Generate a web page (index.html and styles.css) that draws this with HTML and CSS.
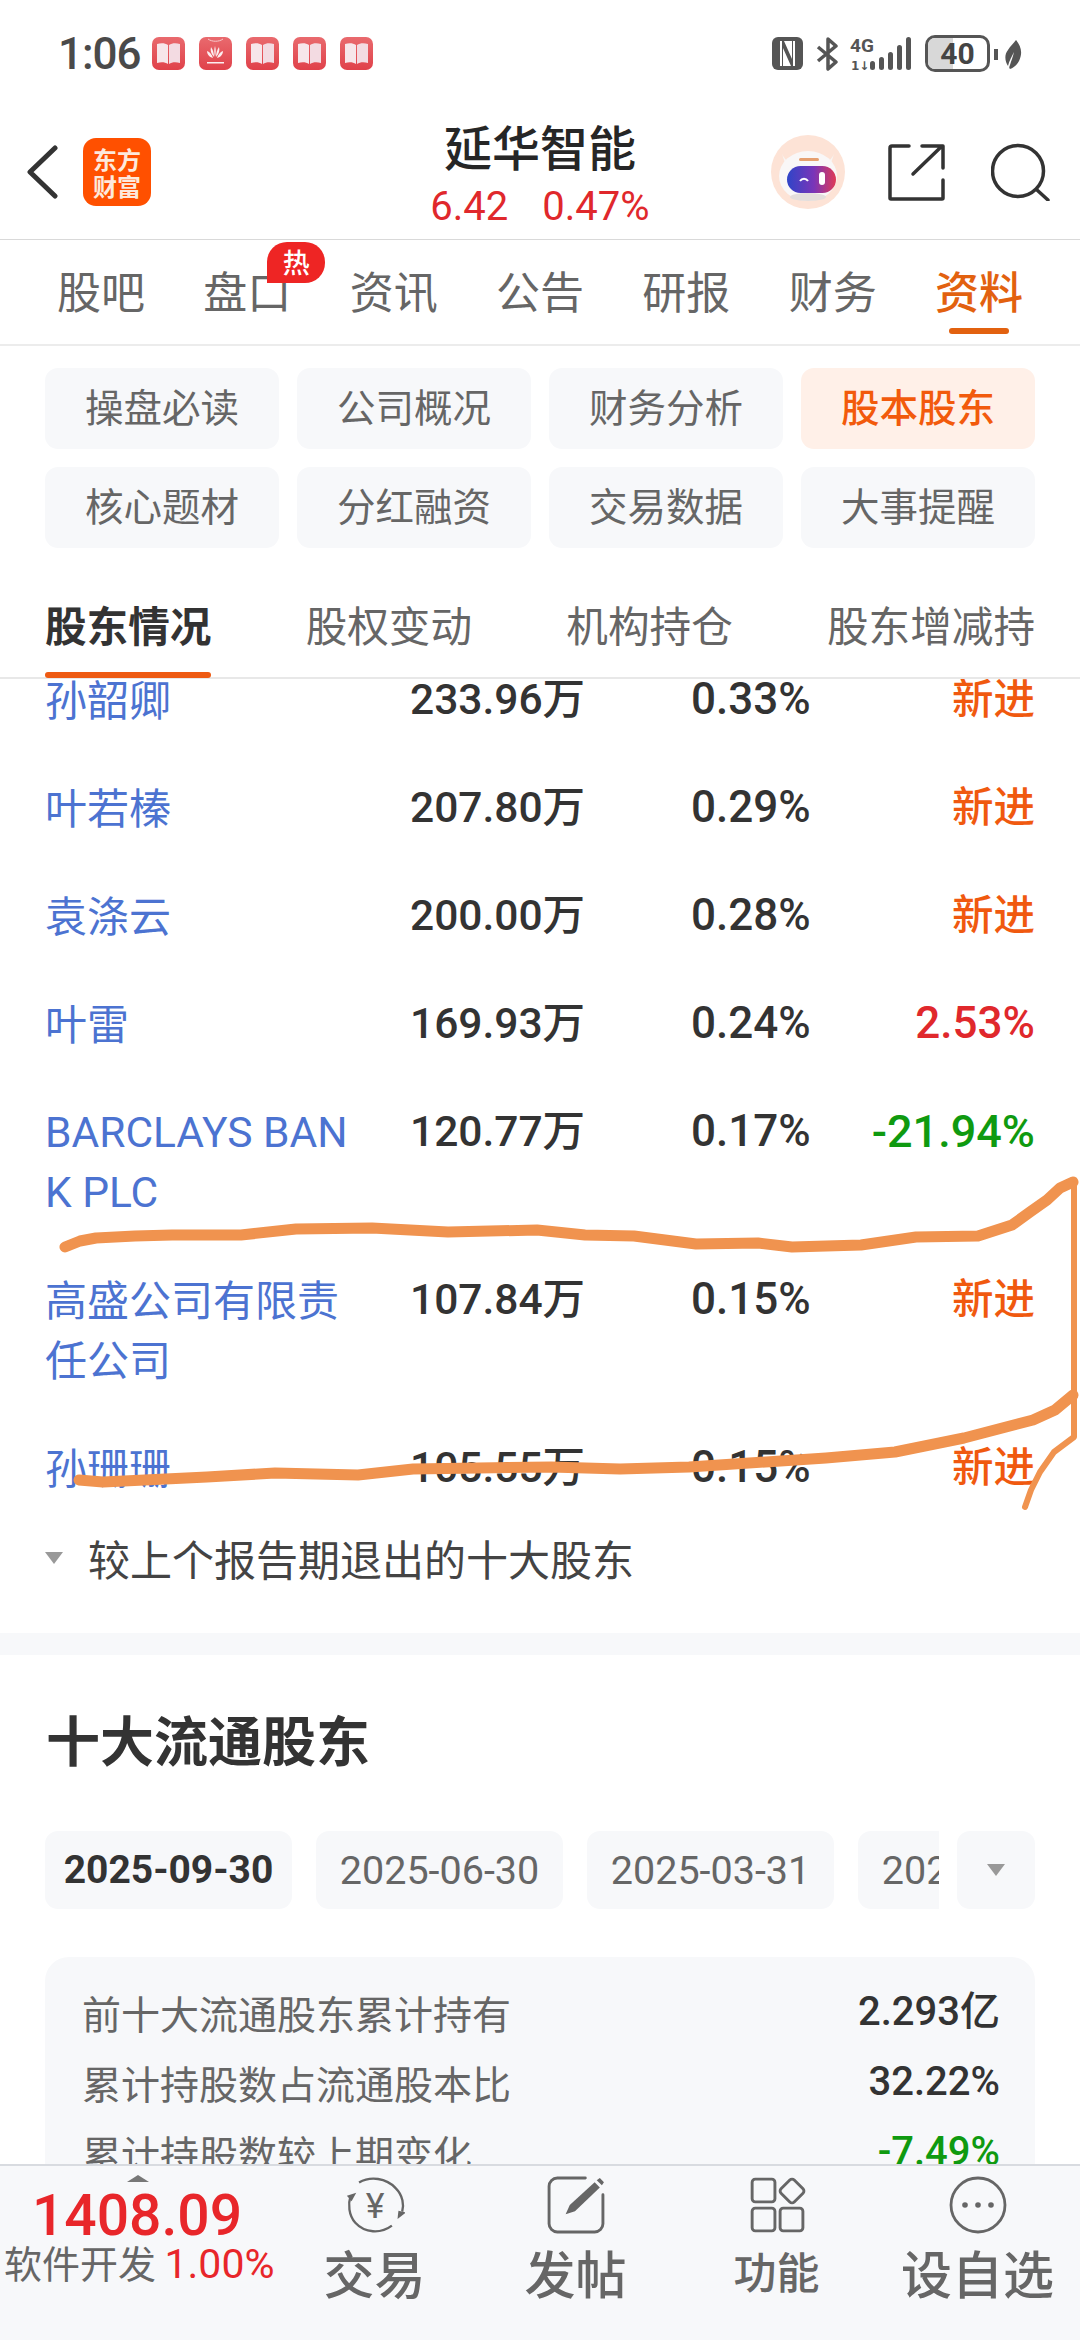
FILE: index.html
```html
<!DOCTYPE html>
<html lang="zh-CN">
<head>
  <meta charset="UTF-8">
  <meta name="viewport" content="width=device-width, initial-scale=1.0">
  <title>延华智能</title>
  <link rel="stylesheet" href="styles.css">
</head>
<body>
  <svg width="0" height="0" class="defs">
    <defs>
      <linearGradient id="appRed" x1="0" y1="0" x2="0" y2="1">
        <stop offset="0" stop-color="#e96a6e"/>
        <stop offset="1" stop-color="#e0414a"/>
      </linearGradient>
      <linearGradient id="visor" x1="0" y1="0" x2="1" y2="0">
        <stop offset="0" stop-color="#2f45c8"/>
        <stop offset="0.55" stop-color="#7a35b8"/>
        <stop offset="1" stop-color="#e03a55"/>
      </linearGradient>
      <symbol id="bookApp" viewBox="0 0 33 33">
        <rect width="33" height="33" rx="7" fill="url(#appRed)"/>
        <path d="M5 7c4-1 8-1 11 1v19c-3-2-7-2-11-1z" fill="#f7e6ea"/>
        <path d="M28 7c-4-1-8-1-11 1v19c3-2 7-2 11-1z" fill="#f3dbe2"/>
      </symbol>
    </defs>
  </svg>

  <div class="page">
    <div class="status-bar">
      <div class="status-left">
        <span class="time">1:06</span>
        <svg class="app-icon"><use href="#bookApp"/></svg>
        <svg class="app-icon" viewBox="0 0 33 33">
          <rect width="33" height="33" rx="7" fill="url(#appRed)"/>
          <path d="M9 2c4 3 11 3 15 0" fill="none" stroke="#f7c9cc" stroke-width="1"/>
          <g fill="#fbeef0">
            <path d="M16 20c-1-4-1-8 0-11 1 3 1 7 0 11z"/>
            <path d="M17 20c0-4 1-7 3-10 1 3 0 7-3 10z"/>
            <path d="M15 20c0-4-1-7-3-10-1 3 0 7 3 10z"/>
            <path d="M18 21c1-3 3-6 6-7 0 3-2 6-6 7z"/>
            <path d="M14 21c-1-3-3-6-6-7 0 3 2 6 6 7z"/>
            <rect x="8" y="25" width="17" height="1.5"/>
          </g>
        </svg>
        <svg class="app-icon"><use href="#bookApp"/></svg>
        <svg class="app-icon"><use href="#bookApp"/></svg>
        <svg class="app-icon"><use href="#bookApp"/></svg>
      </div>
      <div class="status-right">
        <svg class="nfc" viewBox="0 0 31 33">
          <rect width="31" height="33" rx="6" fill="#555"/>
          <path d="M9 4v25M22 4v25" stroke="#fff" stroke-width="2" fill="none"/>
          <path d="M12 4h8v18zM11 11l8 18h-8z" fill="#fff"/>
        </svg>
        <svg class="bt" viewBox="0 0 23 34">
          <path d="M2 10l18 15-8 7V2l8 7L2 24" fill="none" stroke="#555" stroke-width="3.5" stroke-linejoin="round"/>
        </svg>
        <svg class="signal" viewBox="0 0 62 36">
          <text x="0" y="16" class="net-text">4G</text>
          <text x="1" y="34" class="net-small">1↓</text>
          <rect x="20" y="25" width="5" height="9" rx="2.5" fill="#555"/>
          <rect x="29" y="21" width="5" height="13" rx="2.5" fill="#555"/>
          <rect x="38" y="16" width="5" height="18" rx="2.5" fill="#555"/>
          <rect x="47" y="9" width="5" height="25" rx="2.5" fill="#555"/>
          <rect x="56" y="1" width="5" height="33" rx="2.5" fill="#555"/>
        </svg>
        <div class="battery"><span class="battery-fill"></span><span class="battery-num">40</span></div>
        <span class="battery-tip"></span>
        <svg class="leaf" viewBox="0 0 17 30">
          <path d="M11 0c5 6 7 13 3 21-2 4-6 7-9 8-1-1-1-2 0-4 1-4 3-8 4-13-2 4-5 9-6 14C0 21-1 15 3 10 5 6 9 3 11 0z" fill="#555"/>
        </svg>
      </div>
    </div>

    <div class="header">
      <div class="header-left">
        <svg class="back" viewBox="0 0 31 54">
          <polyline points="28,3 3,27 28,51" fill="none" stroke="#333" stroke-width="5" stroke-linecap="round" stroke-linejoin="round"/>
        </svg>
        <div class="logo">东方<br>财富</div>
      </div>
      <div class="header-title">
        <div class="stock-name">延华智能</div>
        <div class="stock-price"><span>6.42</span><span>0.47%</span></div>
      </div>
      <div class="header-right">
        <svg class="robot" viewBox="0 0 74 74">
          <circle cx="37" cy="37" r="37" fill="#fde3d6"/>
          <path d="M10 16c2 7 6 11 12 12l-6 6zM64 16c-2 7-6 11-12 12l6 6z" fill="#f8f5f3"/>
          <ellipse cx="37" cy="41" rx="29" ry="25" fill="#f9f7f7"/>
          <ellipse cx="37" cy="62" rx="18" ry="4" fill="#e4dedc"/>
          <rect x="28" y="23" width="20" height="3" rx="1.5" fill="#e6a070"/>
          <rect x="16" y="31" width="49" height="27" rx="13.5" fill="url(#visor)"/>
          <path d="M29 46c2-3 6-3 8 0" fill="none" stroke="#fff" stroke-width="2"/>
          <rect x="48" y="37" width="6" height="13" rx="3" fill="#fff"/>
        </svg>
        <svg class="share" viewBox="0 0 58 58">
          <path d="M22 3H5a2 2 0 0 0-2 2v50a1 1 0 0 0 1 1h51a1 1 0 0 0 1-1V37M26 31L55 3M35 3h21v22" fill="none" stroke="#333" stroke-width="3.5" stroke-linecap="round" stroke-linejoin="round"/>
        </svg>
        <svg class="search" viewBox="0 0 60 58">
          <circle cx="27" cy="28" r="25.5" fill="none" stroke="#333" stroke-width="3.5"/>
          <path d="M46 47l11 10" fill="none" stroke="#333" stroke-width="3.5" stroke-linecap="round"/>
        </svg>
      </div>
    </div>

    <div class="tabs">
      <a class="tab">股吧</a>
      <a class="tab">盘口<span class="hot">热</span></a>
      <a class="tab">资讯</a>
      <a class="tab">公告</a>
      <a class="tab">研报</a>
      <a class="tab">财务</a>
      <a class="tab active">资料</a>
    </div>

    <div class="chips">
      <a class="chip">操盘必读</a>
      <a class="chip">公司概况</a>
      <a class="chip">财务分析</a>
      <a class="chip active">股本股东</a>
      <a class="chip">核心题材</a>
      <a class="chip">分红融资</a>
      <a class="chip">交易数据</a>
      <a class="chip">大事提醒</a>
    </div>

    <div class="subtabs">
      <a class="subtab active">股东情况</a>
      <a class="subtab">股权变动</a>
      <a class="subtab">机构持仓</a>
      <a class="subtab">股东增减持</a>
    </div>

    <div class="scroll">
      <div class="holders">
        <div class="holder"><div class="name">孙韶卿</div><div class="num">233.96万</div><div class="pct">0.33%</div><div class="chg new">新进</div></div>
        <div class="holder"><div class="name">叶若榛</div><div class="num">207.80万</div><div class="pct">0.29%</div><div class="chg new">新进</div></div>
        <div class="holder"><div class="name">袁涤云</div><div class="num">200.00万</div><div class="pct">0.28%</div><div class="chg new">新进</div></div>
        <div class="holder"><div class="name">叶雷</div><div class="num">169.93万</div><div class="pct">0.24%</div><div class="chg up">2.53%</div></div>
        <div class="holder"><div class="name latin">BARCLAYS BANK PLC</div><div class="num">120.77万</div><div class="pct">0.17%</div><div class="chg down">-21.94%</div></div>
        <div class="holder"><div class="name">高盛公司有限责任公司</div><div class="num">107.84万</div><div class="pct">0.15%</div><div class="chg new">新进</div></div>
        <div class="holder"><div class="name">孙珊珊</div><div class="num">105.55万</div><div class="pct">0.15%</div><div class="chg new">新进</div></div>
      </div>
      <div class="fold"><span class="tri"></span>较上个报告期退出的十大股东</div>
      <div class="band"></div>
      <div class="section">
        <h2>十大流通股东</h2>
        <div class="dates">
          <div class="date-list">
            <a class="date active">2025-09-30</a>
            <a class="date">2025-06-30</a>
            <a class="date">2025-03-31</a>
            <a class="date">2024-12-31</a>
          </div>
          <a class="date-more"><span class="tri"></span></a>
        </div>
        <div class="summary">
          <div class="sum-row"><span>前十大流通股东累计持有</span><b>2.293亿</b></div>
          <div class="sum-row"><span>累计持股数占流通股本比</span><b>32.22%</b></div>
          <div class="sum-row"><span>累计持股数较上期变化</span><b class="down">-7.49%</b></div>
        </div>
      </div>
    </div>

    <div class="footer">
      <div class="index">
        <span class="index-tri"></span>
        <div class="index-num">1408.09</div>
        <div class="index-sub">软件开发 <span>1.00%</span></div>
      </div>
      <div class="action">
        <svg class="action-icon" viewBox="0 0 64 60">
          <path d="M15 6C27-1 44 1 54 12c8 8 9 18 7 25" fill="none" stroke="#666" stroke-width="2.5"/>
          <path d="M56 45l9-7-8-2z" fill="#666"/>
          <path d="M50 52C38 61 21 60 11 49 4 41 3 29 6 20" fill="none" stroke="#666" stroke-width="2.5"/>
          <path d="M2 20l10-3-5 9z" fill="#666"/>
          <text x="32" y="44" text-anchor="middle" class="yen">¥</text>
        </svg>
        <div class="action-label">交易</div>
      </div>
      <div class="action">
        <svg class="action-icon" viewBox="0 0 56 56">
          <path d="M37 2H10a8 8 0 0 0-8 8v36a8 8 0 0 0 8 8h36a8 8 0 0 0 8-8V18" fill="none" stroke="#666" stroke-width="2.8" stroke-linecap="round"/>
          <path d="M18 37l4-9L46 6l5 5-24 23z" fill="#666"/>
          <path d="M48 4l3-2 4 4-2 3z" fill="#666"/>
        </svg>
        <div class="action-label">发帖</div>
      </div>
      <div class="action small">
        <svg class="action-icon" viewBox="-2 0 56 56">
          <g fill="none" stroke="#666" stroke-width="2.8">
            <rect x="2" y="3" width="22" height="22" rx="3"/>
            <rect x="2" y="31" width="22" height="22" rx="3"/>
            <rect x="29" y="31" width="22" height="22" rx="3"/>
            <rect x="31.5" y="5.5" width="18" height="18" rx="3" transform="rotate(45 40.5 14.5)"/>
          </g>
        </svg>
        <div class="action-label">功能</div>
      </div>
      <div class="action">
        <svg class="action-icon" viewBox="0 0 58 58">
          <circle cx="29" cy="29" r="27" fill="none" stroke="#666" stroke-width="2.8"/>
          <circle cx="16" cy="29" r="2.8" fill="#666"/>
          <circle cx="29" cy="29" r="2.8" fill="#666"/>
          <circle cx="42" cy="29" r="2.8" fill="#666"/>
        </svg>
        <div class="action-label">设自选</div>
      </div>
    </div>

    <!-- hand drawn marks on top of the screenshot -->
    <svg class="scribble" viewBox="0 0 1080 2340">
      <path d="M65 1247L80 1241 96 1238 135 1236 172 1235 241 1235 296 1229 372 1228 448 1232 537 1230 585 1235 634 1236 696 1244 758 1243 792 1247 861 1245 916 1237 978 1236 1012 1225 1030 1212 1047 1200 1060 1188 1073 1182"/>
      <path d="M1074 1184V1437L1054 1452 1040 1472 1031 1490 1025 1507" class="thin"/>
      <path d="M79 1480L103 1482 207 1477 275 1473 358 1475 413 1469 551 1467 620 1469 689 1467 826 1458 895 1452 964 1438 1033 1420 1055 1410 1073 1395"/>
    </svg>
  </div>
</body>
</html>
```

FILE: styles.css
```css
* {
  box-sizing: border-box;
}

html, body {
  margin: 0;
  padding: 0;
}

body {
  background: #fff;
  font-family: "Noto Sans CJK SC", Roboto, sans-serif;
  color: #333;
}

a {
  text-decoration: none;
  color: inherit;
}

.defs {
  position: absolute;
}

.page {
  position: relative;
  width: 1080px;
  height: 2340px;
  display: flex;
  flex-direction: column;
  overflow: hidden;
  background: #fff;
}

/* status bar */
.status-bar {
  height: 100px;
  flex: none;
  display: flex;
  justify-content: space-between;
  padding: 35px 58px 0 58px;
}

.status-left {
  display: flex;
  align-items: flex-start;
  gap: 14px;
}

.time {
  font-family: Roboto, sans-serif;
  font-size: 44px;
  line-height: 38px;
  font-weight: 500;
  color: #4a4a4a;
  letter-spacing: -1px;
  width: 80px;
}

.app-icon {
  width: 33px;
  height: 33px;
  margin-top: 2px;
}

.status-right {
  display: flex;
  align-items: flex-start;
}

.nfc {
  width: 31px;
  height: 33px;
  margin-top: 2px;
}

.bt {
  width: 25px;
  height: 34px;
  margin: 2px 0 0 12px;
}

.signal {
  width: 62px;
  height: 36px;
  margin: 1px 0 0 10px;
}

.net-text {
  font-family: Roboto, sans-serif;
  font-size: 19px;
  font-weight: 700;
  fill: #555;
}

.net-small {
  font-family: "DejaVu Sans", sans-serif;
  font-size: 12px;
  font-weight: 700;
  fill: #555;
}

.battery {
  position: relative;
  width: 65px;
  height: 37px;
  margin-left: 13px;
  border: 3px solid #555;
  border-radius: 10px;
  overflow: hidden;
  display: flex;
  align-items: center;
  justify-content: center;
}

.battery-fill {
  position: absolute;
  left: 0;
  top: 0;
  bottom: 0;
  width: 25px;
  background: #d8d8d8;
}

.battery-num {
  position: relative;
  font-family: Roboto, sans-serif;
  font-size: 30px;
  font-weight: 700;
  line-height: 30px;
  color: #444;
}

.battery-tip {
  width: 4px;
  height: 11px;
  margin: 14px 0 0 4px;
  background: #555;
}

.leaf {
  width: 17px;
  height: 30px;
  margin: 5px 0 0 7px;
}

/* header */
.header {
  height: 140px;
  flex: none;
  display: grid;
  grid-template-columns: 1fr auto 1fr;
  border-bottom: 1px solid #d9d9d9;
}

.header-left {
  display: flex;
  align-items: center;
  padding: 4px 0 0 27px;
  gap: 25px;
}

.back {
  width: 31px;
  height: 54px;
}

.logo {
  width: 68px;
  height: 68px;
  background: #ff5000;
  border-radius: 13px;
  color: #fde9dc;
  font-size: 24px;
  line-height: 27px;
  font-weight: 700;
  text-align: center;
  padding-top: 7px;
}

.header-title {
  padding-top: 15px;
  text-align: center;
}

.stock-name {
  font-size: 48px;
  line-height: 60px;
  font-weight: 500;
  color: #262626;
}

.stock-price {
  display: flex;
  justify-content: center;
  gap: 34px;
  margin-top: 3px;
  font-family: Roboto, sans-serif;
  font-size: 40px;
  line-height: 58px;
  color: #e0282c;
}

.header-right {
  display: flex;
  align-items: center;
  justify-content: flex-end;
  padding: 4px 29px 0 0;
}

.robot {
  width: 74px;
  height: 74px;
  margin-right: 42px;
}

.share {
  width: 58px;
  height: 58px;
  margin-right: 46px;
}

.search {
  width: 60px;
  height: 58px;
}

/* top tabs */
.tabs {
  height: 106px;
  flex: none;
  display: flex;
  justify-content: space-between;
  padding: 0 57px;
  border-bottom: 2px solid #ececec;
}

.tab {
  position: relative;
  padding-top: 18px;
  font-size: 44px;
  line-height: 64px;
  color: #666;
}

.tab.active {
  color: #e2610f;
  font-weight: 500;
}

.tab.active::after {
  content: "";
  position: absolute;
  left: 14px;
  right: 14px;
  bottom: 10px;
  height: 6px;
  border-radius: 3px;
  background: #e2610f;
}

.hot {
  position: absolute;
  left: 64px;
  top: 2px;
  width: 58px;
  height: 41px;
  border-radius: 20px 20px 20px 0;
  background: #ee2524;
  color: #fff;
  font-size: 27px;
  line-height: 39px;
  font-weight: 500;
  text-align: center;
}

/* section chips */
.chips {
  flex: none;
  display: grid;
  grid-template-columns: repeat(4, 234px);
  grid-auto-rows: 81px;
  gap: 18px;
  padding: 22px 45px 0 45px;
}

.chip {
  display: flex;
  align-items: center;
  justify-content: center;
  padding-bottom: 8px;
  border-radius: 13px;
  background: #f7f8fa;
  font-size: 38.5px;
  color: #666;
}

.chip.active {
  background: #fff0e8;
  color: #f25a0c;
  font-weight: 500;
}

/* sub tabs */
.subtabs {
  flex: none;
  display: flex;
  justify-content: space-between;
  height: 131px;
  padding: 0 45px;
  border-bottom: 2px solid #e8e8e8;
}

.subtab {
  position: relative;
  padding-top: 46px;
  font-size: 41.6px;
  line-height: 60px;
  color: #666;
}

.subtab.active {
  color: #333;
  font-weight: 700;
}

.subtab.active::after {
  content: "";
  position: absolute;
  left: 0;
  right: 0;
  bottom: -1px;
  height: 6px;
  border-radius: 3px;
  background: #ee5a12;
}

/* scrolled content */
.scroll {
  flex: 1;
  min-height: 0;
  overflow: hidden;
}

.holders {
  display: flex;
  flex-direction: column;
  gap: 48px;
  margin-top: -11px;
  padding: 0 45px;
}

.holder {
  display: grid;
  grid-template-columns: 365px 281px 1fr auto;
  font-size: 42px;
  line-height: 60px;
}

.name {
  width: 312px;
  color: #4c73d1;
  word-break: break-all;
}

.name.latin {
  margin-bottom: -3px;
  padding-top: 3px;
  font-family: Roboto, sans-serif;
  font-size: 42.5px;
}

.num, .pct {
  padding-top: 3px;
  line-height: 57px;
  font-family: Roboto, "Noto Sans CJK SC", sans-serif;
  font-weight: 500;
  color: #333;
}

.num {
  font-size: 42.5px;
}

.pct {
  font-size: 44px;
}

.chg {
  padding-top: 3px;
  line-height: 57px;
  font-family: Roboto, "Noto Sans CJK SC", sans-serif;
  font-size: 45px;
  font-weight: 500;
  text-align: right;
}

.new {
  color: #f0590f;
  font-size: 41.5px;
}

.up {
  color: #e0282c;
  font-size: 44px;
}

.down {
  color: #0f9a10;
}

.fold {
  display: flex;
  align-items: center;
  gap: 25px;
  margin-top: 32px;
  padding-left: 45px;
  font-size: 42px;
  line-height: 60px;
  color: #444;
}

.tri {
  display: block;
  width: 0;
  height: 0;
  border-left: 9px solid transparent;
  border-right: 9px solid transparent;
  border-top: 12px solid #999;
}

.band {
  height: 22px;
  margin-top: 45px;
  background: #f7f8fa;
}

.section {
  padding: 49px 45px 0 45px;
}

.section h2 {
  margin: 0 0 0 1px;
  font-size: 54px;
  line-height: 70px;
  font-weight: 700;
  color: #333;
}

.dates {
  display: flex;
  gap: 18px;
  margin-top: 57px;
}

.date-list {
  display: flex;
  flex: 1;
  gap: 24px;
  min-width: 0;
  overflow: hidden;
}

.date {
  flex: none;
  width: 247px;
  height: 78px;
  display: flex;
  align-items: center;
  justify-content: center;
  border-radius: 13px;
  background: #f7f8fa;
  font-family: Roboto, sans-serif;
  font-size: 39.5px;
  color: #666;
}

.date.active {
  font-size: 39px;
  font-weight: 700;
  color: #333;
}

.date-more {
  flex: none;
  width: 78px;
  height: 78px;
  display: flex;
  align-items: center;
  justify-content: center;
  border-radius: 13px;
  background: #f7f8fa;
}

.summary {
  margin-top: 48px;
  padding: 20px 35px 40px 37px;
  border-radius: 24px;
  background: #f7f8fa;
}

.sum-row {
  display: flex;
  justify-content: space-between;
  font-size: 39px;
  line-height: 70px;
  color: #666;
}

.sum-row b {
  font-family: Roboto, "Noto Sans CJK SC", sans-serif;
  font-size: 40px;
  font-weight: 500;
  color: #333;
}

.sum-row b.down {
  color: #0f9a10;
}

/* bottom bar */
.footer {
  flex: none;
  height: 176px;
  display: grid;
  grid-template-columns: 274px repeat(4, 201px);
  border-top: 2px solid #d8dbe0;
  background: #f7f8fa;
}

.index {
  position: relative;
  padding-top: 20px;
  text-align: center;
}

.index-tri {
  position: absolute;
  left: 127px;
  top: 9px;
  width: 0;
  height: 0;
  border-left: 11px solid transparent;
  border-right: 11px solid transparent;
  border-bottom: 7px solid #777;
}

.index-num {
  font-family: Roboto, sans-serif;
  font-size: 57px;
  line-height: 60px;
  font-weight: 500;
  color: #e8262a;
}

.index-sub {
  padding-left: 4px;
  font-size: 38px;
  line-height: 32px;
  color: #666;
  white-space: nowrap;
}

.index-sub span {
  font-family: Roboto, sans-serif;
  font-size: 41px;
  color: #e8262a;
}

.action {
  display: flex;
  flex-direction: column;
  align-items: center;
  padding-top: 10px;
}

.action-icon {
  width: 60px;
  height: 58px;
}

.yen {
  font-family: Roboto, sans-serif;
  font-size: 38px;
  fill: #666;
}

.action-label {
  margin-top: 5px;
  font-size: 51px;
  line-height: 66px;
  font-weight: 500;
  color: #666;
}

.action.small .action-label {
  font-size: 43px;
  margin-top: 3px;
}

/* free drawn overlay */
.scribble {
  position: absolute;
  left: 0;
  top: 0;
  width: 1080px;
  height: 2340px;
  pointer-events: none;
}

.scribble path {
  fill: none;
  stroke: #f0934f;
  stroke-width: 11;
  stroke-linecap: round;
  stroke-linejoin: round;
}

.scribble path.thin {
  stroke-width: 6;
}
```
